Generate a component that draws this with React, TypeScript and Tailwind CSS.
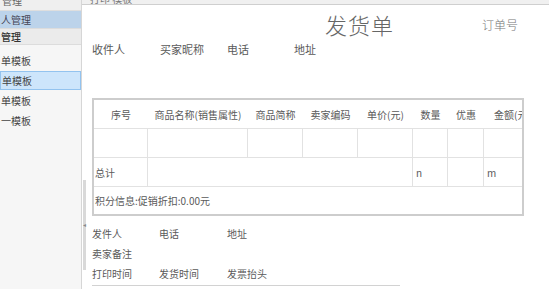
import React from 'react';

const sidebarItems = [
  { label: '单模板', selected: false },
  { label: '单模板', selected: true },
  { label: '单模板', selected: false },
  { label: '一模板', selected: false },
];

const headers = ['序号', '商品名称(销售属性)', '商品简称', '卖家编码', '单价(元)', '数量', '优惠', '金额(元)'];

const cell = 'border-r border-[#e2e2e2] last:border-r-0';

export default function App() {
  return (
    <div className="flex w-[549px] h-[289px] overflow-hidden bg-white font-['Noto_Sans_CJK_SC',sans-serif] text-[10px] text-[#5a5a5a]">
      {/* sidebar */}
      <div className="w-[82px] shrink-0 flex flex-col bg-[#f6f6f6] border-r border-[#d6d6d6]">
        <div className="h-[11px] overflow-hidden bg-[#efefef] border-b border-[#dedede]">
          <div className="-mt-[7px] pl-[2px] text-[#666]">管理</div>
        </div>
        <div className="h-[17px] flex items-center bg-[#bcd3ea] text-[#445] pl-[1px]">人管理</div>
        <div className="h-[17px] flex items-center bg-[#ebebeb] border-y border-[#dcdcdc] text-[#333] pl-[1px] font-medium">管理</div>
        <div className="flex flex-col pt-[6px] gap-[1px]">
          {sidebarItems.map((item, i) => (
            <div
              key={i}
              className={
                item.selected
                  ? 'h-[19px] flex items-center bg-[#cde5fb] border border-[#93c3ef] pl-[1px] text-[#444]'
                  : 'h-[19px] flex items-center pl-[1px] text-[#444]'
              }
            >
              {item.label}
            </div>
          ))}
        </div>
      </div>

      {/* main */}
      <div className="relative flex-1 flex flex-col">
        <div className="h-[5px] overflow-hidden bg-[#f0f0f0] border-b border-[#cfcfcf]">
          <div className="-mt-[9px] pl-[8px] text-[#777]">打印 模板</div>
        </div>

        {/* splitter */}
        <div className="absolute left-[1px] top-[180px] h-[90px] w-[3px] bg-[#d9d9d9] flex items-center justify-center">
          <span className="text-[6px] text-[#888] leading-none">◂</span>
        </div>

        <div className="flex flex-col pl-[10px]">
          <div className="h-[37px] flex items-center">
            <span className="ml-[233px] text-[22px] font-light text-[#666] tracking-[1px] leading-none mt-[1px]">发货单</span>
            <span className="ml-[88px] text-[12px] font-light text-[#777] mt-[3px]">订单号</span>
          </div>

          <div className="flex h-[14px] items-center text-[11px]">
            <span className="w-[68px]">收件人</span>
            <span className="w-[67px]">买家昵称</span>
            <span className="w-[67px]">电话</span>
            <span>地址</span>
          </div>

          {/* table */}
          <div className="mt-[42px] w-[432px] border-2 border-[#cdcdcd] text-[10px]">
            <div className="grid grid-cols-[54px_100px_55px_55px_55px_35px_36px_38px] h-[29px] border-b border-[#e2e2e2] items-center">
              {headers.map((h, i) => (
                <div key={i} className={i === 7 ? 'whitespace-nowrap overflow-hidden pl-[10px]' : 'whitespace-nowrap text-center'}>
                  {h}
                </div>
              ))}
            </div>
            <div className="grid grid-cols-[54px_100px_55px_55px_55px_35px_36px_38px] h-[29px] border-b border-[#e2e2e2]">
              {headers.map((_, i) => (
                <div key={i} className={cell} />
              ))}
            </div>
            <div className="grid grid-cols-[54px_265px_35px_36px_38px] h-[29px] border-b border-[#e2e2e2] items-stretch">
              <div className={`${cell} flex items-center pl-[1px]`}>总计</div>
              <div className={cell} />
              <div className={`${cell} flex items-center pl-[3px]`}>n</div>
              <div className={cell} />
              <div className={`${cell} flex items-center pl-[3px]`}>m</div>
            </div>
            <div className="h-[27px] flex items-center pl-[1px]">积分信息:促销折扣:0.00元</div>
          </div>

          <div className="mt-[7px] flex flex-col text-[10px]">
            <div className="flex h-[20px] items-center">
              <span className="w-[67px]">发件人</span>
              <span className="w-[68px]">电话</span>
              <span>地址</span>
            </div>
            <div className="flex h-[20px] items-center">
              <span>卖家备注</span>
            </div>
            <div className="flex h-[20px] items-center">
              <span className="w-[67px]">打印时间</span>
              <span className="w-[68px]">发货时间</span>
              <span>发票抬头</span>
            </div>
            <div className="mt-[2px] w-[308px] border-b border-[#d2d2d2]" />
          </div>
        </div>
      </div>
    </div>
  );
}
